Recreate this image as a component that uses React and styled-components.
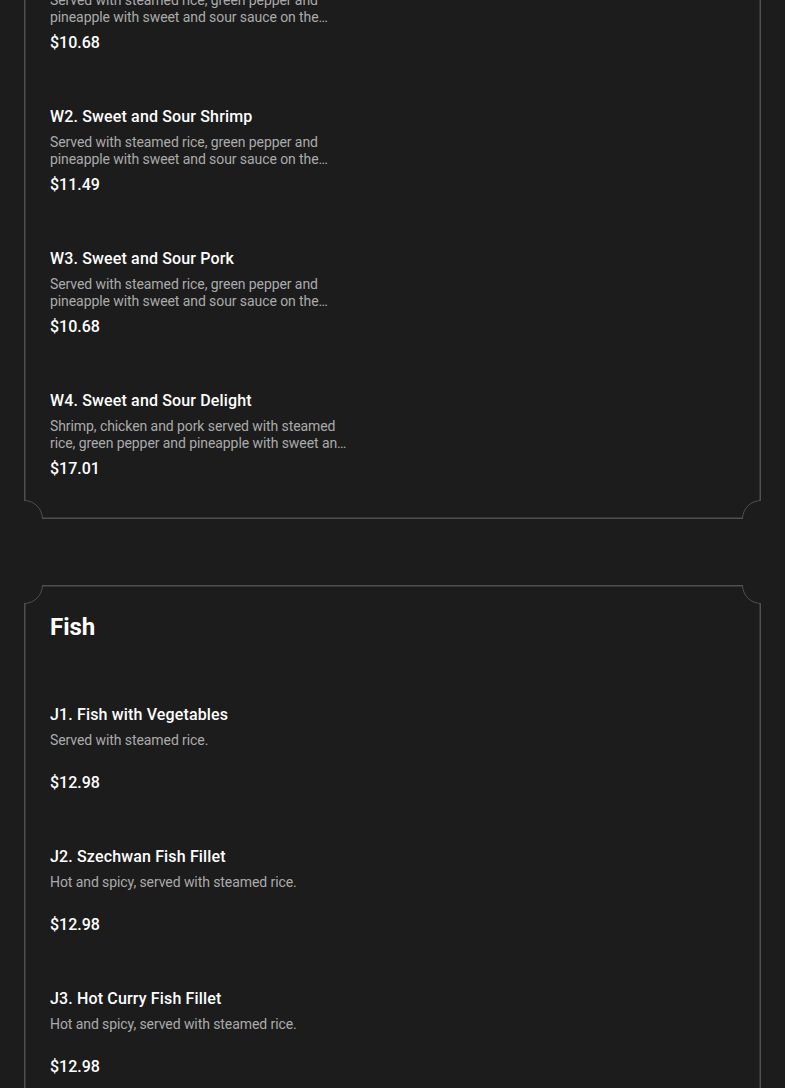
import React from "react";
import styled, { createGlobalStyle } from "styled-components";

const GlobalStyle = createGlobalStyle`
  html, body {
    margin: 0;
    padding: 0;
    background: #1c1c1c;
    font-family: Roboto, "Liberation Sans", Arial, sans-serif;
    -webkit-font-smoothing: antialiased;
  }
`;

const Page = styled.div`
  display: flex;
  flex-direction: column;
  gap: 66px;
  padding: 0 24px 40px;
  /* the view is scrolled down into the menu */
  margin-top: -155px;
`;

const Card = styled.section`
  position: relative;
  overflow: hidden;
  box-shadow: inset 0 0 0 1.5px #4f4f4f;
  padding: 26px 26px 40px;
  display: flex;
  flex-direction: column;
`;

const Corner = styled.span`
  position: absolute;
  width: 38px;
  height: 38px;
  border-radius: 50%;
  box-sizing: border-box;
  border: 1.5px solid #4f4f4f;
  background: #1c1c1c;
  ${({ $v }) => ($v === "top" ? "top: -19px;" : "bottom: -19px;")}
  ${({ $h }) => ($h === "left" ? "left: -19px;" : "right: -19px;")}
`;

const Heading = styled.h2`
  margin: 0 0 62px;
  color: #ffffff;
  font-size: 24px;
  line-height: 32px;
  font-weight: 700;
`;

const ItemList = styled.div`
  display: flex;
  flex-direction: column;
  gap: 54px;
`;

const Item = styled.div`
  display: flex;
  flex-direction: column;
`;

const ItemTitle = styled.h3`
  margin: 0;
  color: #ffffff;
  font-size: 16px;
  line-height: 20px;
  font-weight: 500;
  letter-spacing: 0.15px;
`;

const ItemDescription = styled.p`
  margin: 7px 0 0;
  width: 300px;
  height: 34px;
  color: #ababab;
  font-size: 14px;
  line-height: 17px;
  font-weight: 400;
  letter-spacing: -0.08px;
  display: -webkit-box;
  -webkit-line-clamp: 2;
  -webkit-box-orient: vertical;
  overflow: hidden;
`;

const Price = styled.span`
  margin-top: 7px;
  color: #ffffff;
  font-size: 16px;
  line-height: 20px;
  font-weight: 500;
`;

const sweetSour =
  "Served with steamed rice, green pepper and pineapple with sweet and sour sauce on the side.";

const menu = [
  {
    name: "Sweet and Sour",
    items: [
      { title: "W1. Sweet and Sour Chicken", description: sweetSour, price: "$10.68" },
      { title: "W2. Sweet and Sour Shrimp", description: sweetSour, price: "$11.49" },
      { title: "W3. Sweet and Sour Pork", description: sweetSour, price: "$10.68" },
      {
        title: "W4. Sweet and Sour Delight",
        description:
          "Shrimp, chicken and pork served with steamed rice, green pepper and pineapple with sweet and sour sauce on the side.",
        price: "$17.01",
      },
    ],
  },
  {
    name: "Fish",
    items: [
      { title: "J1. Fish with Vegetables", description: "Served with steamed rice.", price: "$12.98" },
      { title: "J2. Szechwan Fish Fillet", description: "Hot and spicy, served with steamed rice.", price: "$12.98" },
      { title: "J3. Hot Curry Fish Fillet", description: "Hot and spicy, served with steamed rice.", price: "$12.98" },
      { title: "J4. Fish with Black Bean Sauce", description: "Served with steamed rice.", price: "$12.98" },
    ],
  },
];

const MenuCard = ({ name, items }) => (
  <Card>
    <Corner $v="top" $h="left" />
    <Corner $v="top" $h="right" />
    <Corner $v="bottom" $h="left" />
    <Corner $v="bottom" $h="right" />
    <Heading>{name}</Heading>
    <ItemList>
      {items.map(({ title, description, price }) => (
        <Item key={title}>
          <ItemTitle>{title}</ItemTitle>
          <ItemDescription>{description}</ItemDescription>
          <Price>{price}</Price>
        </Item>
      ))}
    </ItemList>
  </Card>
);

export default function App() {
  return (
    <>
      <GlobalStyle />
      <Page>
        {menu.map((section) => (
          <MenuCard key={section.name} {...section} />
        ))}
      </Page>
    </>
  );
}
